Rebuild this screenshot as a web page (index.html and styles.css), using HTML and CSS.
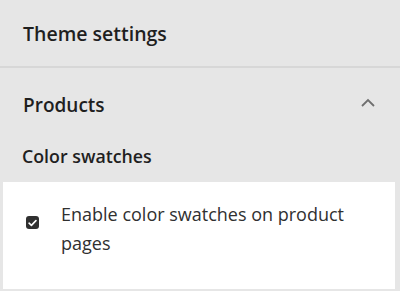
FILE: index.html
```html
<!DOCTYPE html>
<html lang="en">
<head>
  <meta charset="UTF-8" />
  <title>Theme settings</title>
  <link rel="stylesheet" href="styles.css">
</head>
<body>
  <div class="panel">
    <div class="panel-header">Theme settings</div>

    <div class="section">
      <div class="section-head">
        <span class="section-title">Products</span>
        <svg class="chevron" width="16" height="10" viewBox="0 0 16 10">
          <path d="M2 8 L8 2 L14 8" fill="none" stroke="#6f6f6f" stroke-width="1.8" />
        </svg>
      </div>
      <div class="group-title">Color swatches</div>

      <div class="card">
        <label class="check-row">
          <span class="checkbox">
            <svg width="9" height="8" viewBox="0 0 10 8">
              <path d="M1.2 4.2 L3.8 6.6 L8.8 1.4" fill="none" stroke="#fff" stroke-width="1.8" stroke-linecap="round" stroke-linejoin="round" />
            </svg>
          </span>
          <span class="check-text">Enable color swatches on product pages</span>
        </label>
      </div>
    </div>
  </div>
</body>
</html>
```

FILE: styles.css
```css
body {
  margin: 0;
  background: #e6e6e6;
  font-family: "Open Sans", "Noto Sans", sans-serif;
  color: #1f1f1f;
}

.panel {
  width: 400px;
  height: 291px;
  overflow: hidden;
}

.panel-header {
  height: 66px;
  display: flex;
  align-items: center;
  padding-left: 23px;
  font-size: 19.5px;
  font-weight: 600;
  border-bottom: 2px solid #d7d7d7;
}

.section-head {
  height: 74px;
  display: flex;
  align-items: center;
  justify-content: space-between;
  padding: 0 24px 0 23px;
}

.section-title {
  font-size: 19px;
  font-weight: 600;
}

.chevron {
  margin-top: -4px;
}

.group-title {
  padding-left: 22px;
  font-size: 17.8px;
  font-weight: 600;
  height: 40px;
  line-height: 28px;
}

.card {
  background: #fff;
  margin: 0 5px 0 3px;
  height: 107px;
  box-sizing: border-box;
  padding: 18px 30px 0 23px;
}

.check-row {
  display: flex;
  align-items: flex-start;
  gap: 22px;
}

.checkbox {
  flex: none;
  width: 13px;
  height: 13px;
  margin-top: 16px;
  border-radius: 3px;
  background: #303030;
  display: flex;
  align-items: center;
  justify-content: center;
}

.check-text {
  font-size: 18px;
  line-height: 29px;
  color: #303030;
}
```
